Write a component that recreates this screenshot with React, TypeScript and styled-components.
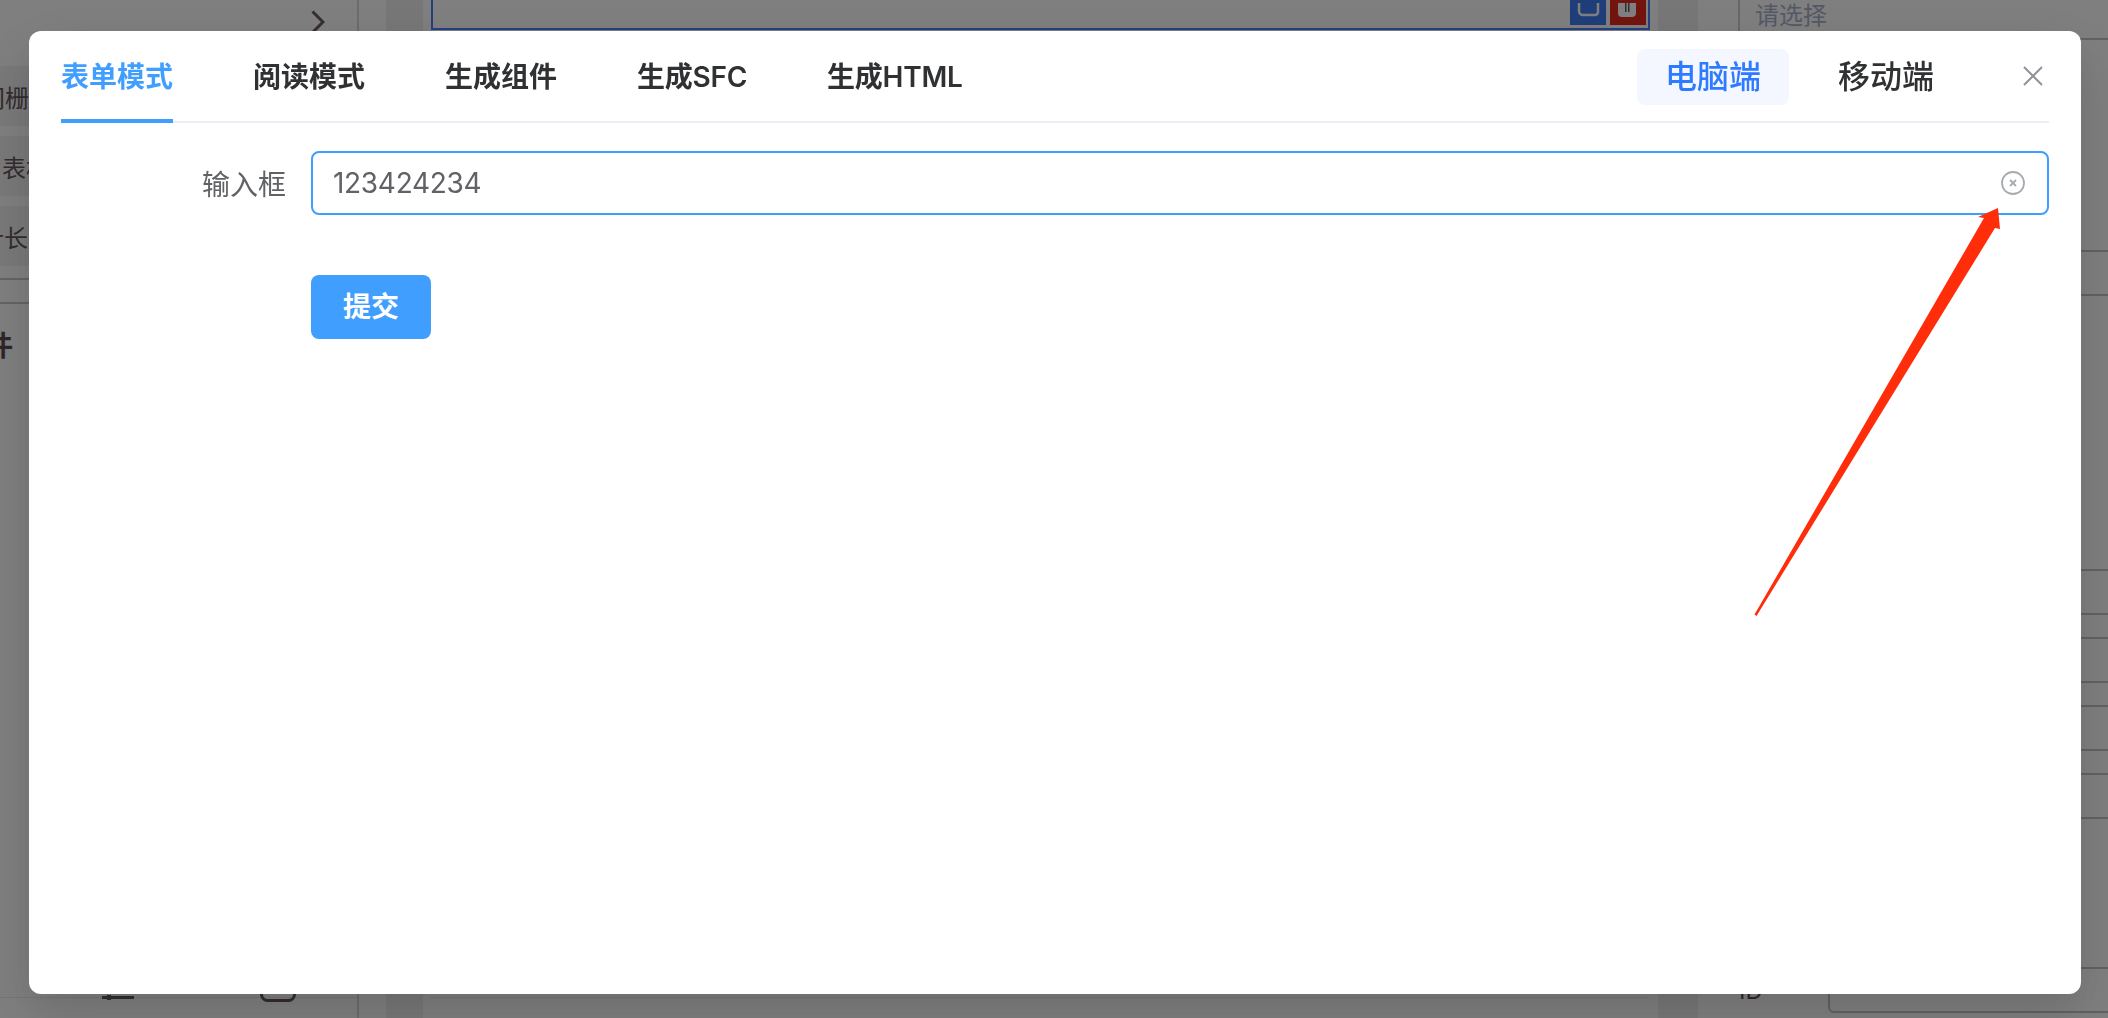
import React from "react";
import styled, { createGlobalStyle } from "styled-components";

const Global = createGlobalStyle`
  html, body { margin: 0; padding: 0; height: 100%; overflow: hidden; background: #fff; }
  * { box-sizing: border-box; }
  body { font-family: Inter, "Noto Sans CJK SC", sans-serif; color: #303133; }
`;

/* ---------- page behind the dialog ---------- */
const Page = styled.div`
  display: grid;
  grid-template-columns: 359px 1379px 370px;
  width: 2108px;
  height: 1018px;
  overflow: hidden;
`;
const LeftPanel = styled.aside`
  display: flex;
  flex-direction: column;
  border-right: 2px solid #d8d8d8;
  overflow: hidden;
  height: 1018px;
`;
const ChevronRow = styled.div`
  display: flex;
  justify-content: flex-end;
  padding: 10px 32px 0 0;
  height: 66px;
`;
const SideRow = styled.div`
  height: 60px;
  margin-bottom: 10px;
  display: flex;
  align-items: center;
  padding-right: 20px;
  background: #f2f2f2;
  font-size: 24px;
  color: #65585e;
  white-space: nowrap;
`;
const SideText = styled.span<{ $shift: number }>`
  margin-left: ${(p) => p.$shift}px;
`;
const SideRule = styled.div`
  height: 26px;
  margin-top: 2px;
  border-top: 2px solid #c8c8c8;
  border-bottom: 2px solid #c8c8c8;
`;
const SideHeading = styled.div`
  margin: 20px 0 0 -43px;
  font-size: 28px;
  font-weight: 700;
  line-height: 44px;
  color: #5a4d52;
  white-space: nowrap;
`;
const SideFooter = styled.div`
  margin-top: auto;
  height: 52px;
  margin-bottom: 20px;
  padding-left: 102px;
  display: flex;
  align-items: flex-end;
  gap: 126px;
  border-bottom: 1px dotted #dcdcdc;
`;
const FooterBar = styled.svg`
  display: block;
  flex: none;
  margin-bottom: -3px;
`;
const FooterSquare = styled.svg`
  display: block;
  flex: none;
  margin-bottom: -5px;
`;
const Center = styled.main`
  display: grid;
  grid-template-columns: 37px 1fr 40px;
  column-gap: 8px;
  padding-left: 27px;
  padding-right: 40px;
`;
const Gutter = styled.div`
  background: #efefef;
  height: 1018px;
`;
const CanvasColumn = styled.div`
  display: flex;
  flex-direction: column;
  height: 1018px;
`;
const Frame = styled.div`
  height: 30px;
  border: 2px solid #4680ff;
  border-top: none;
  display: flex;
  justify-content: flex-end;
  align-items: flex-end;
  gap: 4px;
  padding: 0 2px 3px 0;
`;
const ToolButton = styled.div<{ $bg: string }>`
  width: 36px;
  height: 25px;
  background: ${(p) => p.$bg};
  display: flex;
  justify-content: center;
  align-items: flex-end;
  overflow: hidden;
`;
const CanvasRule = styled.div`
  margin-top: auto;
  margin-bottom: 20px;
  border-bottom: 1px dotted #dcdcdc;
`;
const RightPanel = styled.aside`
  display: flex;
  flex-direction: column;
  overflow: hidden;
  height: 1018px;
`;
const SelectRow = styled.div`
  height: 40px;
  flex: none;
  display: flex;
  align-items: flex-start;
  padding: 1px 0 0 15px;
  border-left: 2px solid #d0d0d0;
  border-bottom: 2px solid #c4c4c4;
  font-size: 24px;
  line-height: 30px;
  color: #a9b0cc;
`;
const FieldRow = styled.div<{ $gap: number }>`
  display: flex;
  align-items: center;
  flex: none;
  margin-top: ${(p) => p.$gap}px;
  height: 46px;
`;
const FieldLabel = styled.span`
  width: 90px;
  flex: none;
  padding-left: 1px;
  font-size: 24px;
  color: #5f5358;
`;
const FieldBox = styled.div`
  width: 320px;
  height: 46px;
  flex: none;
  border: 2px solid #c4c4c4;
  border-radius: 6px;
`;

/* ---------- scrim and dialog ---------- */
const Scrim = styled.div`
  position: fixed;
  inset: 0;
  background: rgba(0, 0, 0, 0.5);
`;
const Dialog = styled.section`
  position: fixed;
  left: 29px;
  top: 31px;
  width: 2052px;
  height: 963px;
  background: #fff;
  border-radius: 12px;
  padding: 0 32px;
  box-shadow: 0 24px 64px 8px rgba(0, 0, 0, 0.08), 0 16px 40px rgba(0, 0, 0, 0.08);
`;
const Header = styled.header`
  display: flex;
  align-items: stretch;
  height: 92px;
  border-bottom: 2px solid #ebeef5;
  padding-top: 18px;
`;
const Tabs = styled.nav`
  display: flex;
  gap: 80px;
  flex: 1;
`;
const Tab = styled.div<{ $active?: boolean; $tight?: boolean }>`
  height: 74px;
  line-height: 56px;
  font-size: 28px;
  font-weight: 600;
  letter-spacing: ${(p) => (p.$tight ? "-0.25px" : "0")};
  white-space: nowrap;
  color: ${(p) => (p.$active ? "#409eff" : "#303133")};
  border-bottom: 4px solid ${(p) => (p.$active ? "#409eff" : "transparent")};
`;
const DeviceSwitch = styled.div`
  display: flex;
  gap: 21px;
  align-items: flex-start;
`;
const DeviceButton = styled.div<{ $active?: boolean }>`
  width: 152px;
  height: 56px;
  line-height: 56px;
  text-align: center;
  font-size: 32px;
  font-weight: 500;
  border-radius: 8px;
  color: ${(p) => (p.$active ? "#2f7bff" : "#303133")};
  background: ${(p) => (p.$active ? "#f4f7ff" : "transparent")};
`;
const CloseButton = styled.div`
  width: 20px;
  height: 20px;
  margin: 17px 6px 0 61px;
  display: flex;
`;
const Form = styled.form`
  display: flex;
  flex-direction: column;
  gap: 60px;
  padding-top: 28px;
`;
const FormRow = styled.div`
  display: grid;
  grid-template-columns: 225px 1fr;
  column-gap: 25px;
  align-items: center;
`;
const Label = styled.label`
  font-size: 28px;
  color: #606266;
  text-align: right;
`;
const InputWrap = styled.div`
  height: 64px;
  display: flex;
  align-items: center;
  justify-content: space-between;
  padding: 0 22px 0 20px;
  border: 2px solid #409eff;
  border-radius: 8px;
`;
const Value = styled.span`
  font-size: 28px;
  letter-spacing: -0.3px;
  color: #606266;
`;
const Submit = styled.div`
  width: 120px;
  height: 64px;
  line-height: 64px;
  background: #409eff;
  color: #fff;
  text-align: center;
  font-size: 28px;
  font-weight: 700;
  border-radius: 8px;
`;
const Arrow = styled.svg`
  position: fixed;
  left: 0;
  top: 0;
`;

const rightGaps = [210, 273, 22, 22, 22, 148];

export default function App() {
  return (
    <>
      <Global />
      <Page>
        <LeftPanel>
          <ChevronRow>
            <svg width="14" height="24" viewBox="0 0 14 24" fill="none">
              <path d="M1.5 1.5 L12 12 L1.5 22.5" stroke="#6a5a60" strokeWidth="3" />
            </svg>
          </ChevronRow>
          <SideRow><SideText $shift={-19}>间栅格布局</SideText></SideRow>
          <SideRow><SideText $shift={2}>表格布局</SideText></SideRow>
          <SideRow><SideText $shift={-20}>计长</SideText></SideRow>
          <SideRule />
          <SideHeading>组件</SideHeading>
          <SideFooter>
            <FooterBar width="32" height="5" viewBox="0 0 32 5">
              <rect x="0" y="1" width="32" height="3" fill="#65585e" />
              <rect x="5" y="0" width="4" height="5" fill="#65585e" />
            </FooterBar>
            <FooterSquare width="36" height="36" viewBox="0 0 36 36" fill="none">
              <rect x="1.5" y="1.5" width="33" height="33" rx="6" stroke="#65585e" strokeWidth="3" />
            </FooterSquare>
          </SideFooter>
        </LeftPanel>
        <Center>
          <Gutter />
          <CanvasColumn>
            <Frame>
              <ToolButton $bg="#3f7cf2">
                <svg width="24" height="22" viewBox="0 0 24 22" fill="none">
                  <path d="M3 0V8a4 4 0 0 0 4 4h12a3 3 0 0 0 3-3V0" stroke="#fff" strokeWidth="2.5" />
                </svg>
              </ToolButton>
              <ToolButton $bg="#e6281e">
                <svg width="24" height="22" viewBox="0 0 24 22" fill="#fff">
                  <rect x="2" y="-6" width="18" height="20" rx="4" />
                  <rect x="9" y="0" width="1.5" height="9" fill="#6a5a60" />
                  <rect x="12" y="0" width="1.5" height="9" fill="#6a5a60" />
                </svg>
              </ToolButton>
            </Frame>
            <CanvasRule />
          </CanvasColumn>
          <Gutter />
        </Center>
        <RightPanel>
          <SelectRow>请选择</SelectRow>
          {rightGaps.map((gap, i) => (
            <FieldRow key={i} $gap={gap}>
              <FieldLabel>{i === rightGaps.length - 1 ? "ID" : ""}</FieldLabel>
              <FieldBox />
            </FieldRow>
          ))}
        </RightPanel>
      </Page>

      <Scrim />

      <Dialog>
        <Header>
          <Tabs>
            <Tab $active>表单模式</Tab>
            <Tab>阅读模式</Tab>
            <Tab>生成组件</Tab>
            <Tab $tight>生成SFC</Tab>
            <Tab $tight>生成HTML</Tab>
          </Tabs>
          <DeviceSwitch>
            <DeviceButton $active>电脑端</DeviceButton>
            <DeviceButton>移动端</DeviceButton>
          </DeviceSwitch>
          <CloseButton>
            <svg width="20" height="20" viewBox="0 0 20 20" fill="none">
              <path d="M1 1L19 19M19 1L1 19" stroke="#909399" strokeWidth="2" />
            </svg>
          </CloseButton>
        </Header>
        <Form>
          <FormRow>
            <Label>输入框</Label>
            <InputWrap>
              <Value>123424234</Value>
              <svg width="24" height="24" viewBox="0 0 24 24" fill="none">
                <circle cx="12" cy="12" r="11" stroke="#a8abb2" strokeWidth="1.8" />
                <path d="M9 9L15 15M15 9L9 15" stroke="#a8abb2" strokeWidth="1.8" />
              </svg>
            </InputWrap>
          </FormRow>
          <FormRow>
            <span />
            <Submit>提交</Submit>
          </FormRow>
        </Form>
      </Dialog>

      <Arrow width="2108" height="1018" viewBox="0 0 2108 1018">
        <path
          d="M1754.5 614.5 L1756.5 616 L1995 228 L2000 229 L1998 208 L1978 217 L1984 218 Z"
          fill="#ff2d0a"
        />
      </Arrow>
    </>
  );
}
